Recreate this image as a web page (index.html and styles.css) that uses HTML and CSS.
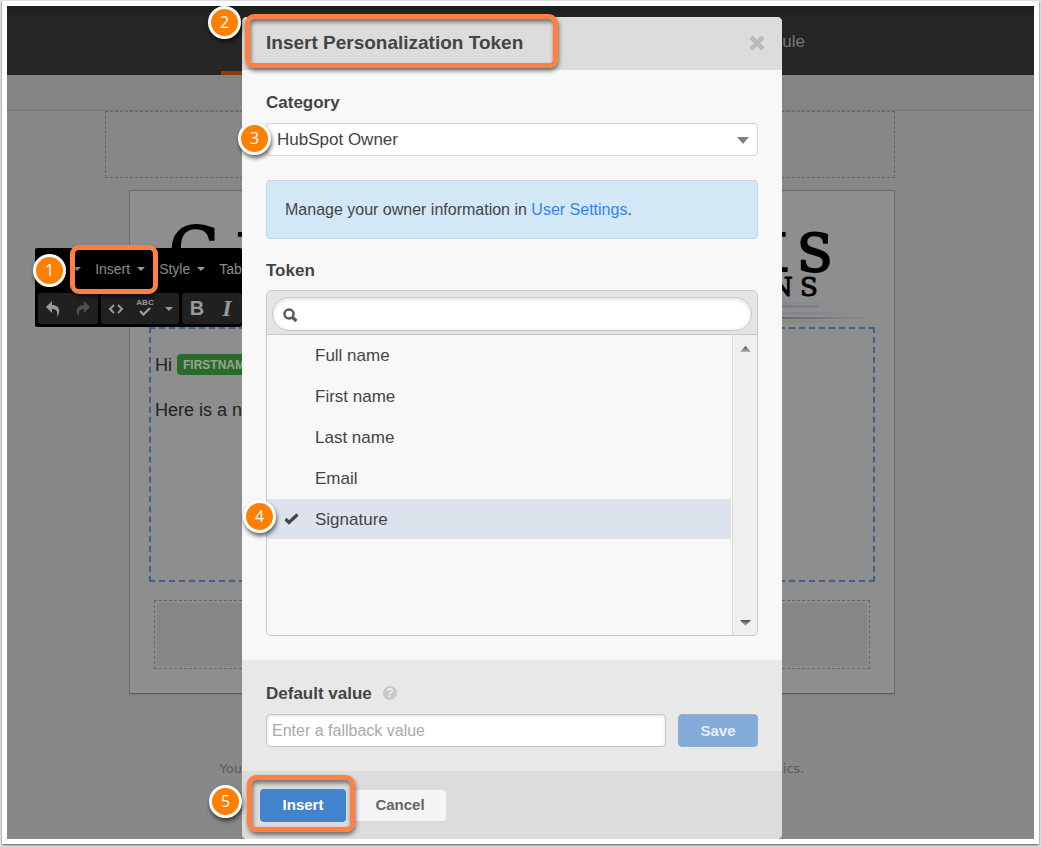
FILE: index.html
```html
<!DOCTYPE html>
<html lang="en">
<head>
    <meta charset="UTF-8">
    <title>Insert Personalization Token</title>
    <meta name="viewport" content="width=device-width, initial-scale=1.0">
    <link rel="stylesheet" href="styles.css">
</head>
<body>
<div class="frame">
    <div class="editor">

        <div class="page">
            <header class="topbar">
                <nav class="steps">
                    <span class="step active"></span>
                    <span class="step">ule</span>
                </nav>
            </header>
            <div class="subbar"></div>

            <div class="canvas">
                <div class="email">
                    <div class="dropzone"></div>
                    <div class="card">
                        <svg class="logo" viewBox="0 0 726 136" aria-hidden="true">
                            <defs>
                                <linearGradient id="fade" x1="0" x2="1" y1="0" y2="0">
                                    <stop offset="0.86" stop-color="#8e8e8e" stop-opacity="0"/>
                                    <stop offset="1" stop-color="#8e8e8e"/>
                                </linearGradient>
                            </defs>
                            <text class="logo-initial" x="20" y="82">G</text>
                            <text class="logo-name" x="87 598 648" y="80">IKS</text>
                            <text class="logo-sub" x="621 651" y="105">NS</text>
                            <g fill="none">
                                <path d="M20 112.500H720" stroke="#6f9294" stroke-width="2"/>
                                <path d="M20 115.500H670" stroke="#846a8c" stroke-width="2"/>
                                <path d="M20 122.500H700" stroke="#7f7a90" stroke-width="2"/>
                                <path d="M20 127H720" stroke="#666" stroke-width="2"/>
                                <path d="M20 130.500H700" stroke="#82886f" stroke-width="2"/>
                            </g>
                            <rect x="0" y="108" width="726" height="26" fill="url(#fade)"/>
                        </svg>
                        <div class="rich-text">
                            <p>Hi <span class="chip">FIRSTNAM</span></p>
                            <p>Here is a n</p>
                        </div>
                        <div class="module"></div>
                    </div>
                    <p class="legal"><span>You</span><span>ics.</span></p>
                </div>
            </div>

            <div class="toolbar">
                <div class="menus">
                    <button class="menu" type="button">Edit<i class="caret"></i></button>
                    <button class="menu" type="button">Insert<i class="caret"></i></button>
                    <button class="menu" type="button">Style<i class="caret"></i></button>
                    <button class="menu" type="button">Tab</button>
                </div>
                <div class="tools">
                    <div class="group">
                        <button class="tool" type="button" aria-label="Undo">
                            <svg width="16" height="18" viewBox="0 0 16 18"><path d="M7 1 1 7l6 6V9c4 0 6 2 5 8 4-5 3-12-5-12z" fill="#999"/></svg>
                        </button>
                        <button class="tool" type="button" aria-label="Redo">
                            <svg width="16" height="18" viewBox="0 0 16 18"><path d="M9 1l6 6-6 6V9C5 9 3 11 4 17-0 12 1 5 9 5z" fill="#505050"/></svg>
                        </button>
                    </div>
                    <div class="group spell">
                        <button class="tool" type="button" aria-label="Source code">
                            <svg width="16" height="12" viewBox="0 0 16 12"><path d="M6 2 2 6l4 4M10 2l4 4-4 4" fill="none" stroke="#999" stroke-width="2"/></svg>
                        </button>
                        <button class="tool abc" type="button" aria-label="Spellcheck">
                            <span>ABC</span>
                            <svg width="12" height="9" viewBox="0 0 12 9"><path d="M1 4l3.500 3.500L11 1" fill="none" stroke="#999" stroke-width="2.400"/></svg>
                        </button>
                        <button class="tool drop" type="button" aria-label="Spellcheck options"><i class="caret"></i></button>
                    </div>
                    <div class="group">
                        <button class="tool bold" type="button">B</button>
                        <button class="tool italic" type="button">I</button>
                    </div>
                </div>
                <span class="callout callout-menu"></span>
                <span class="badge badge-1">1</span>
            </div>
        </div>

        <div class="overlay">
            <form class="modal">
                <header class="modal-header">
                    <h1>Insert Personalization Token</h1>
                    <button class="close" type="button" aria-label="Close">
                        <svg width="16" height="16" viewBox="0 0 16 16"><path d="M2 2l12 12M14 2 2 14" fill="none" stroke="#b9b9b9" stroke-width="4.500"/></svg>
                    </button>
                    <span class="callout callout-title"></span>
                    <span class="badge badge-2">2</span>
                </header>

                <div class="modal-body">
                    <label class="label" for="category">Category</label>
                    <div class="select">
                        <select id="category">
                            <option>HubSpot Owner</option>
                        </select>
                        <svg class="select-arrow" width="12" height="7" viewBox="0 0 12 7"><path d="M0 0h12L6 7z" fill="#808080"/></svg>
                        <span class="badge badge-3">3</span>
                    </div>

                    <p class="info">Manage your owner information in <a href="#">User Settings</a>.</p>

                    <label class="label" for="search">Token</label>
                    <div class="picker">
                        <div class="search">
                            <svg class="search-icon" width="15" height="15" viewBox="0 0 15 15"><circle cx="6" cy="6" r="4.500" fill="none" stroke="#595959" stroke-width="2.500"/><path d="M9.500 9.500l4 3.500" stroke="#595959" stroke-width="3.200"/></svg>
                            <input id="search" type="text">
                        </div>
                        <div class="results">
                            <div class="tokens">
                                <label class="token"><input type="radio" name="token"><svg class="check" viewBox="0 0 15 12"><path d="M1.500 6 5 9.500 13.500 1.500"/></svg>Full name</label>
                                <label class="token"><input type="radio" name="token"><svg class="check" viewBox="0 0 15 12"><path d="M1.500 6 5 9.500 13.500 1.500"/></svg>First name</label>
                                <label class="token"><input type="radio" name="token"><svg class="check" viewBox="0 0 15 12"><path d="M1.500 6 5 9.500 13.500 1.500"/></svg>Last name</label>
                                <label class="token"><input type="radio" name="token"><svg class="check" viewBox="0 0 15 12"><path d="M1.500 6 5 9.500 13.500 1.500"/></svg>Email</label>
                                <label class="token selected"><input type="radio" name="token" checked><svg class="check" viewBox="0 0 15 12"><path d="M1.500 6 5 9.500 13.500 1.500"/></svg>Signature<span class="badge badge-4">4</span></label>
                            </div>
                            <div class="scrollbar">
                                <svg width="11" height="6" viewBox="0 0 11 6"><defs><linearGradient id="arrow" x1="0" x2="0" y1="0" y2="1"><stop offset="0" stop-color="#444"/><stop offset="1" stop-color="#bbb"/></linearGradient></defs><path d="M0 6h11L5.500 0z" fill="url(#arrow)"/></svg>
                                <svg width="11" height="6" viewBox="0 0 11 6"><path d="M0 0h11L5.500 6z" fill="url(#arrow)"/></svg>
                            </div>
                        </div>
                    </div>
                </div>

                <div class="fallback">
                    <div class="label-row">
                        <label class="label" for="fallback">Default value</label>
                        <span class="help">?</span>
                    </div>
                    <div class="fallback-row">
                        <input id="fallback" class="text-input" type="text" placeholder="Enter a fallback value">
                        <button class="btn save" type="button">Save</button>
                    </div>
                </div>

                <footer class="actions">
                    <button class="btn primary" type="button">Insert</button>
                    <button class="btn cancel" type="button">Cancel</button>
                    <span class="callout callout-insert"></span>
                    <span class="badge badge-5">5</span>
                </footer>
            </form>
        </div>

    </div>
</div>
</body>
</html>
```
FILE: styles.css
```css
* {
    box-sizing: border-box;
}
body {
    margin: 0;
    padding: 1px 2px 3px;
    background: #e6e6e6;
    color: #444;
    font-family: "Liberation Sans", Arial, sans-serif;
    font-size: 17px;
}
p, h1 {
    margin: 0;
}
button, input, select {
    font-family: inherit;
}
button {
    padding: 0;
    border: 0;
    background: none;
    cursor: pointer;
}
svg {
    display: block;
}
.frame {
    padding: 5px;
    background: #fff;
    box-shadow: 0 1px 2px #555;
}

/* page and overlay share one grid cell, so the taller one sets the height */
.editor {
    display: grid;
    background: #888;
    overflow: hidden;
}
.page, .overlay {
    grid-area: 1 / 1;
}
.page {
    position: relative;
}

/* dimmed email editor */
.topbar {
    display: flex;
    justify-content: center;
    height: 69px;
    padding-right: 15px;
    background: linear-gradient(#191c19, #262626 10px);
}
.steps {
    display: flex;
    justify-content: space-between;
    width: 584px;
}
.step {
    color: #777;
    line-height: 72px;
}
.step.active {
    width: 120px;
    border-bottom: 4px solid #84400f;
}
.subbar {
    height: 36px;
    background: #848484;
    border-bottom: 1px solid #747474;
}
.canvas {
    padding-right: 17px;
}
.email {
    display: flex;
    flex-direction: column;
    align-items: flex-end;
    width: 766px;
    margin: 0 auto;
}
.dropzone {
    width: 790px;
    height: 67px;
    border: 1px dashed #666;
}
.card {
    width: 100%;
    margin-top: 12px;
    padding: 0 19px 24px;
    background: #8e8e8e;
    border: 1px solid #6c6c6c;
    border-bottom-color: #5e5e5e;
    box-shadow: 0 1px 1px #777;
}
.logo {
    width: 100%;
    height: 136px;
    font-family: "DejaVu Serif", serif;
}
.logo text {
    stroke: #000;
}
.logo-initial {
    font-size: 64px;
    stroke-width: 2px;
}
.logo-name {
    font-size: 52px;
    stroke-width: 2px;
}
.logo-sub {
    font-size: 26px;
    stroke-width: 1px;
}
.rich-text {
    height: 255px;
    padding: 25px 4px;
    border: 2px dashed #3f6190;
    color: #222;
    font-size: 18px;
    line-height: 22px;
}
.rich-text p + p {
    margin-top: 23px;
}
.chip {
    display: inline-block;
    padding: 1px 6px 0;
    border-radius: 4px;
    background: #2a6a2b;
    color: #92a792;
    font-size: 12px;
    font-weight: bold;
    line-height: 20px;
    vertical-align: top;
}
.module {
    height: 69px;
    margin: 18px 5px 0;
    padding: 2px;
    border: 1px dashed #666;
    background: #868686 content-box;
}
.legal {
    display: flex;
    justify-content: space-between;
    width: 585px;
    margin: 66px auto 0;
    color: #5a5a5a;
    font-family: "DejaVu Sans", sans-serif;
    font-size: 13px;
    line-height: 18px;
}

/* floating editor toolbar */
.toolbar {
    position: absolute;
    top: 242px;
    left: 28px;
    width: 207px;
    padding-bottom: 3px;
    border-radius: 2px;
    background: #000;
}
.menus {
    display: flex;
    height: 45px;
    padding-bottom: 4px;
}
.menu {
    display: flex;
    align-items: center;
    gap: 7px;
    padding: 0 7px;
    color: #8c8c8c;
    font-size: 14px;
}
.caret {
    width: 0;
    height: 0;
    border: 4px solid transparent;
    border-top-color: #999;
    border-bottom: 0;
}
.tools {
    display: flex;
    gap: 3px;
    padding-left: 3px;
}
.group {
    display: flex;
    border-radius: 3px;
    background: #202020;
}
.tool {
    display: flex;
    align-items: center;
    justify-content: center;
    width: 30px;
    height: 31px;
    color: #999;
    font-family: "Liberation Serif", serif;
    font-size: 24px;
}
.tool.abc {
    flex-direction: column;
    width: 28px;
    padding-bottom: 3px;
    font-family: "Liberation Sans", sans-serif;
    font-size: 8px;
    font-weight: bold;
    line-height: 9px;
}
.tool.drop {
    width: 20px;
}
.tool.bold {
    font-family: "Liberation Sans", sans-serif;
    font-size: 20px;
    font-weight: bold;
}
.tool.italic {
    font-style: italic;
    font-weight: bold;
}

/* modal */
.overlay {
    display: flex;
    justify-content: center;
    align-items: flex-start;
    padding: 11px 17px 0 0;
    z-index: 1;
}
.modal {
    width: 540px;
    border-radius: 5px;
    background: #f8f8f8;
}
.modal-header {
    position: relative;
    display: flex;
    justify-content: space-between;
    align-items: center;
    height: 53px;
    padding: 0 17px 2px 24px;
    border-radius: 5px 5px 0 0;
    background: #dcdcdc;
}
.modal-header h1 {
    font-size: 19px;
    line-height: 24px;
}
.modal-body {
    padding: 23px 24px 24px;
}
.label {
    display: block;
    font-weight: bold;
    line-height: 20px;
}
.select {
    position: relative;
    margin: 10px 0 24px;
}
.select select {
    display: block;
    width: 100%;
    height: 33px;
    padding: 0 10px;
    border: 1px solid #d6d6d6;
    border-radius: 4px;
    background: #fff;
    color: #444;
    font-size: 17px;
    appearance: none;
}
.select-arrow {
    position: absolute;
    top: 14px;
    right: 9px;
    pointer-events: none;
}
.info {
    margin-bottom: 22px;
    padding: 18px;
    border: 1px solid #b9dbe9;
    border-radius: 4px;
    background: #d3e8f6;
    font-size: 16px;
    line-height: 21px;
}
.info a {
    color: #2f86ee;
    text-decoration: none;
}
.picker {
    margin-top: 9px;
    border: 1px solid #c8c8c8;
    border-radius: 5px;
}
.search {
    position: relative;
    padding: 6px 5px 3px;
    border-bottom: 1px solid #c8c8c8;
    border-radius: 4px 4px 0 0;
    background: #e4e4e4;
}
.search input {
    display: block;
    width: 100%;
    height: 34px;
    padding: 0 16px 0 36px;
    border: 1px solid #c8c8c8;
    border-radius: 17px;
    background: #fff;
    box-shadow: inset 0 1px 4px #ddd;
    font-size: 16px;
}
.search-icon {
    position: absolute;
    top: 17px;
    left: 16px;
}
.results {
    display: flex;
    height: 300px;
}
.tokens {
    display: flex;
    flex: 1;
    flex-direction: column;
    gap: 1px;
}
.token {
    position: relative;
    display: flex;
    align-items: center;
    height: 40px;
    padding: 2px 0 0 17px;
}
.token.selected {
    background: #dde3ed;
}
.token input {
    width: 0;
    height: 0;
    margin: 0;
    appearance: none;
}
.check {
    width: 15px;
    height: 14px;
    margin-right: 16px;
    padding-bottom: 2px;
    fill: none;
    stroke: #444;
    stroke-width: 3.2;
    visibility: hidden;
}
.token input:checked + .check {
    visibility: visible;
}
.scrollbar {
    display: flex;
    flex-direction: column;
    align-items: center;
    justify-content: space-between;
    width: 25px;
    margin-left: 1px;
    padding: 11px 0 9px;
    border-left: 1px solid #ddd;
    border-radius: 0 0 4px 0;
    background: #efefef;
}
.fallback {
    padding: 24px 24px 24px;
    background: #e8e8e8;
}
.label-row {
    display: flex;
    align-items: center;
    gap: 11px;
}
.help {
    width: 14px;
    height: 14px;
    margin-bottom: 2px;
    border-radius: 50%;
    background: #c8c8c8;
    color: #eee;
    font-size: 12px;
    font-weight: bold;
    line-height: 14px;
    text-align: center;
}
.fallback-row {
    display: flex;
    gap: 12px;
    margin-top: 10px;
}
.text-input {
    flex: 1;
    min-width: 0;
    height: 33px;
    padding: 0 5px;
    border: 1px solid #c5c5c5;
    border-radius: 4px;
    background: #fff;
    box-shadow: inset 0 1px 3px #ddd;
    font-size: 16px;
}
.text-input::placeholder {
    color: #aaa;
}
.btn {
    height: 33px;
    padding-bottom: 1px;
    border-radius: 4px;
    font-size: 15px;
    font-weight: bold;
}
.btn.save {
    width: 80px;
    border: 1px solid #93aed0;
    background: #83abd9;
    color: #e8eef6;
}
.btn.primary {
    width: 86px;
    background: #4283cd;
    color: #fff;
}
.btn.cancel {
    width: 92px;
    height: 31px;
    background: #f5f5f5;
    color: #666;
}
.actions {
    position: relative;
    display: flex;
    align-items: center;
    gap: 8px;
    height: 68px;
    padding: 0 18px;
    border-radius: 0 0 5px 5px;
    background: #dcdcdc;
}

/* numbered steps and highlight boxes */
.callout {
    position: absolute;
    border: 5px solid #ff8040;
    border-radius: 9px;
    box-shadow: 1px 3px 4px rgba(0, 0, 0, 0.5), inset 1px 3px 4px rgba(0, 0, 0, 0.5);
    pointer-events: none;
}
.callout-menu {
    top: -3px;
    left: 35px;
    width: 88px;
    height: 49px;
}
.callout-title {
    top: -3px;
    left: 3px;
    width: 313px;
    height: 54px;
}
.callout-insert {
    top: 4px;
    left: 5px;
    width: 108px;
    height: 57px;
}
.badge {
    position: absolute;
    width: 33px;
    height: 33px;
    border: 3px solid #fff;
    border-radius: 50%;
    background: #ff8000;
    box-shadow: 1px 3px 4px rgba(0, 0, 0, 0.6);
    color: #fff;
    font-family: "Open Sans", sans-serif;
    font-size: 16px;
    line-height: 27px;
    text-align: center;
}
.badge-1 {
    top: 6px;
    left: -2px;
}
.badge-2 {
    top: -11px;
    left: -34px;
}
.badge-3 {
    top: -1px;
    left: -28px;
}
.badge-4 {
    top: 1px;
    left: -24px;
}
.badge-5 {
    top: 14px;
    left: -33px;
}
```
